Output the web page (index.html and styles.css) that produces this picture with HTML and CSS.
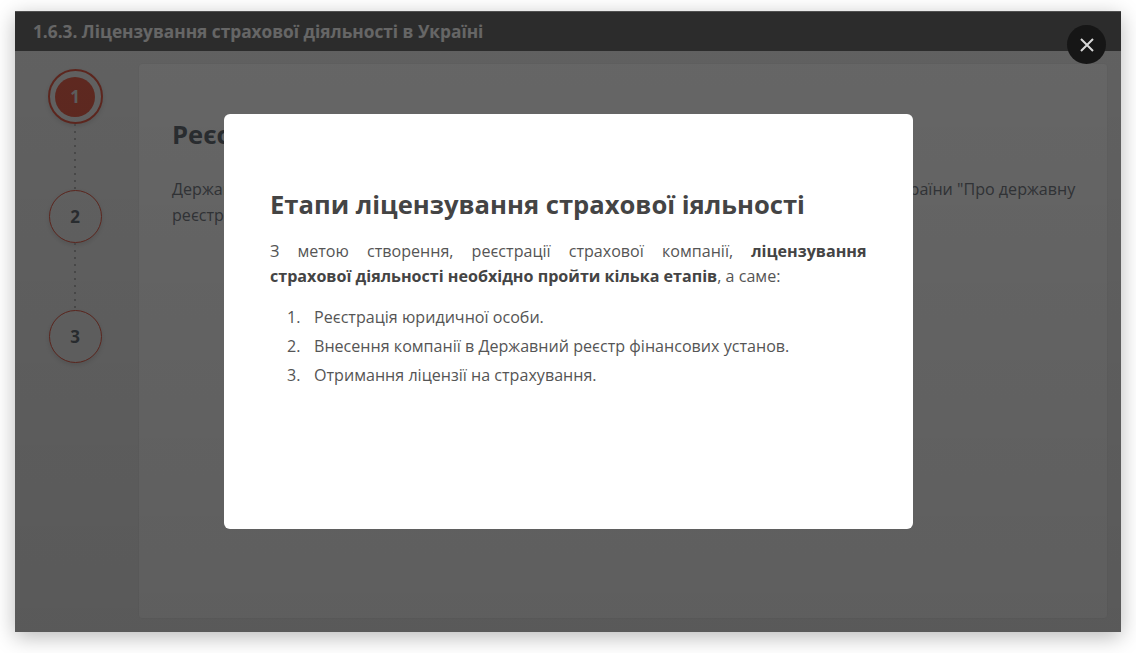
FILE: index.html
```html
<!DOCTYPE html>
<html lang="uk">
<head>
<meta charset="utf-8">
<title>Ліцензування страхової діяльності</title>
<link rel="stylesheet" href="styles.css">
</head>
<body>
<div class="window">
  <header class="window-head">1.6.3. Ліцензування страхової діяльності в Україні</header>
  <div class="window-body">
    <nav class="steps">
      <div class="step step-active"><span class="step-dot">1</span></div>
      <div class="step-line"></div>
      <div class="step"><span class="step-dot">2</span></div>
      <div class="step-line step-line-b"></div>
      <div class="step"><span class="step-dot">3</span></div>
    </nav>
    <main class="card">
      <h2 class="card-title">Реєстрація юридичної особи</h2>
      <p class="card-text">Державна реєстрація юридичної особи, здійснюється відповідно до вимог чинного Закону України "Про державну реєстрацію юридичних осіб та фізичних осіб-підприємців".</p>
    </main>
  </div>
  <div class="overlay">
    <section class="modal">
      <h1 class="modal-title">Етапи ліцензування страхової іяльності</h1>
      <p class="modal-text">З метою створення, реєстрації страхової компанії, <b>ліцензування страхової діяльності необхідно пройти кілька етапів</b>, а саме:</p>
      <ol class="modal-list">
        <li>Реєстрація юридичної особи.</li>
        <li>Внесення компанії в Державний реєстр фінансових установ.</li>
        <li>Отримання ліцензії на страхування.</li>
      </ol>
    </section>
  </div>
  <button class="close" aria-label="Закрити">
    <svg width="16" height="16" viewBox="0 0 16 16"><path d="M2 2 14 14M14 2 2 14" stroke="#d8d8d8" stroke-width="2" fill="none"/></svg>
  </button>
</div>
</body>
</html>
```
FILE: styles.css
```css
* { box-sizing: border-box; }
html, body { margin: 0; height: 100%; }
body {
  background: #fff;
  padding: 11px 15px 21px;
  font-family: "Open Sans", "Noto Sans", sans-serif;
  overflow: hidden;
}
.window {
  position: relative;
  height: 621px;
  background: #fff;
  display: flex;
  flex-direction: column;
  box-shadow: 0 5px 20px rgba(0,0,0,.28);
}
.window-head {
  height: 40px;
  flex: none;
  background: #6e6e6e;
  box-shadow: inset 0 1px 0 #c8c8c8;
  color: #fff;
  font-size: 17.28px;
  font-weight: 700;
  line-height: 41px;
  padding-left: 18px;
}
.window-body {
  flex: 1;
  display: flex;
  padding: 12px 13px 13px 0;
  background: #f2f2f2;
}
.steps {
  width: 123px;
  flex: none;
  display: flex;
  flex-direction: column;
  align-items: center;
  padding-top: 6px;
  padding-right: 3px;
}
.step {
  width: 53px;
  height: 53px;
  border-radius: 50%;
  border: 1.5px solid #e8604c;
  background: #f2f2f2;
  display: flex;
  align-items: center;
  justify-content: center;
  flex: none;
  box-shadow: 0 2px 5px rgba(0,0,0,.12);
}
.step-dot {
  font-size: 17px;
  font-weight: 700;
  color: #687078;
}
.step-active {
  width: 55px;
  height: 55px;
  border-width: 2.5px;
  border-color: #e8604c;
}
.step-active .step-dot {
  width: 40px;
  height: 40px;
  border-radius: 50%;
  background: #ec6650;
  color: #e8e8e8;
  display: flex;
  align-items: center;
  justify-content: center;
}
.step-line {
  width: 2px;
  height: 66px;
  flex: none;
  background: repeating-linear-gradient(#b8b8b8 0 2px, transparent 2px 7px);
}
.step-line-b { height: 67px; }
.card {
  flex: 1;
  background: #fff;
  border: 1px solid #ececec;
  border-radius: 4px;
  padding: 53px 28px 0 33px;
}
.card-title {
  margin: 0 0 23px;
  font-size: 25.6px;
  line-height: 36px;
  font-weight: 700;
  color: #687078;
}
.card-text {
  margin: 0;
  font-size: 16.1px;
  line-height: 26px;
  color: #7a8088;
}
.overlay {
  position: absolute;
  inset: 0;
  background: linear-gradient(rgba(0,0,0,.6), rgba(0,0,0,.63));
  padding: 103px 0 0 208.5px;
}
.modal {
  width: 689px;
  height: 415px;
  background: #fff;
  border-radius: 6px;
  padding: 73px 46px 0 46.5px;
}
.modal-title {
  margin: 0 0 16px;
  font-size: 25.6px;
  line-height: 36px;
  font-weight: 700;
  color: #444;
}
.modal-text {
  margin: 0 0 14px;
  font-size: 16.1px;
  line-height: 25px;
  color: #555;
  text-align: justify;
}
.modal-text b { color: #444; }
.modal-list {
  margin: 0;
  padding: 0 0 0 44px;
  list-style: none;
  counter-reset: item;
  font-size: 16.1px;
  line-height: 29px;
  color: #555;
}
.modal-list li { counter-increment: item; }
.modal-list li::before {
  content: counter(item) ".";
  display: inline-block;
  width: 27px;
  margin-left: -27px;
}
.close {
  position: absolute;
  top: 14px;
  right: 15px;
  width: 39px;
  height: 39px;
  border: 0;
  border-radius: 50%;
  background: #161616;
  padding: 0;
  display: flex;
  align-items: center;
  justify-content: center;
}
```
